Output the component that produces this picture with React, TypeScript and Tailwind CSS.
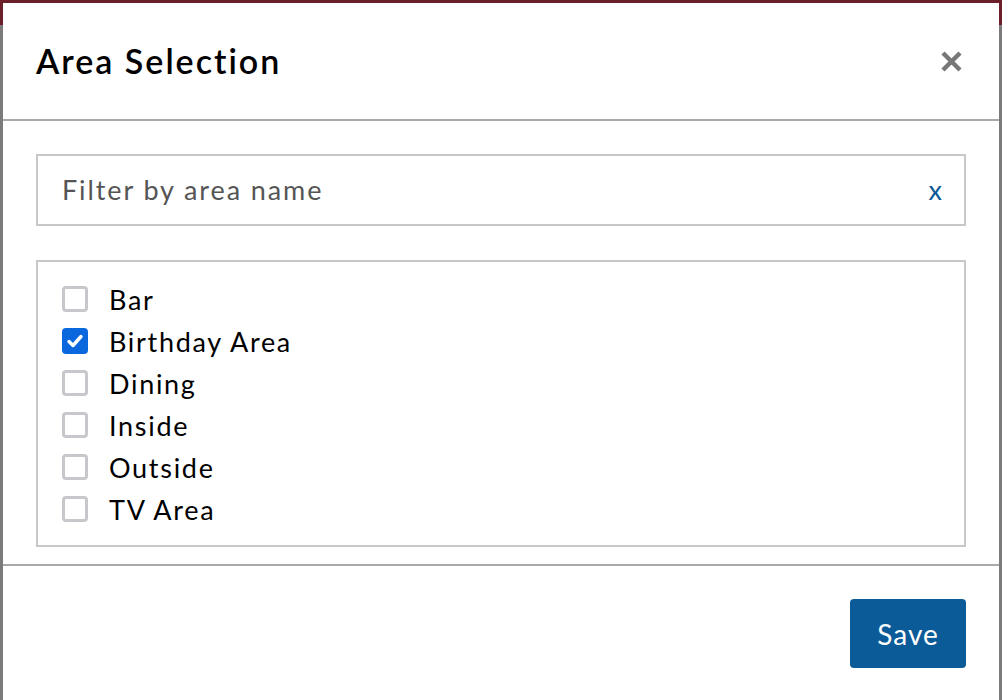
import { useState } from 'react';

const areas = ['Bar', 'Birthday Area', 'Dining', 'Inside', 'Outside', 'TV Area'];

const CheckBox = ({ checked }: { checked: boolean }) =>
  checked ? (
    <span className="w-[26px] h-[26px] rounded-[4px] bg-[#0b67dd] flex items-center justify-center shrink-0">
      <svg width="20" height="20" viewBox="0 0 20 20" fill="none">
        <path d="M4 10.5l4 4 8-9" stroke="white" strokeWidth="3.4" strokeLinecap="round" strokeLinejoin="round" />
      </svg>
    </span>
  ) : (
    <span className="w-[26px] h-[26px] rounded-[4px] border-[3px] border-[#c7c7cc] bg-white shrink-0" />
  );

export default function App() {
  const [selected, setSelected] = useState<string[]>(['Birthday Area']);
  const [query, setQuery] = useState('');

  const toggle = (name: string) =>
    setSelected((prev) => (prev.includes(name) ? prev.filter((n) => n !== name) : [...prev, name]));

  const visible = areas.filter((a) => a.toLowerCase().includes(query.toLowerCase()));

  return (
    <div className="relative w-[1002px] h-[700px] bg-[#7b7b7b] overflow-hidden font-['Lato',sans-serif]">
      {/* dimmed page behind the dialog */}
      <div className="h-[25px] bg-[#6b1f2a]" />

      <div className="absolute left-[3px] top-[3px] right-[3px] bottom-0 bg-white flex flex-col">
        <div className="h-[118px] flex items-center justify-between pl-[33px] pr-[34px] border-b-2 border-[#a9a9a9] shrink-0">
          <h2 className="text-[34px] font-semibold text-black tracking-[2px] pb-[2px]">Area Selection</h2>
          <button className="w-[28px] h-[28px] flex items-center justify-center">
            <svg width="23" height="23" viewBox="0 0 23 23">
              <path d="M3 3l17 17M20 3L3 20" stroke="#777" strokeWidth="4.5" strokeLinecap="butt" />
            </svg>
          </button>
        </div>

        <div className="px-[33px] pt-[33px] pb-[17px] border-b-2 border-[#a9a9a9] shrink-0">
          <div className="h-[72px] border-2 border-[#c8c8c8] flex items-center pl-[24px] pr-[22px]">
            <input
              value={query}
              onChange={(e) => setQuery(e.target.value)}
              placeholder="Filter by area name"
              className="flex-1 text-[27px] tracking-[1.9px] text-[#333] placeholder:text-[#555] outline-none bg-transparent"
            />
            <button onClick={() => setQuery('')} className="text-[27px] text-[#0b5a96] leading-none pb-[2px]">
              x
            </button>
          </div>

          <div className="mt-[34px] h-[287px] border-2 border-[#c8c8c8] pl-[24px] pt-[16px] pb-[14px]">
            {visible.map((name) => (
              <label key={name} onClick={() => toggle(name)} className="h-[42px] flex items-center gap-[21px] cursor-pointer">
                <CheckBox checked={selected.includes(name)} />
                <span className="text-[27px] tracking-[1.7px] text-black pt-[2px]">{name}</span>
              </label>
            ))}
          </div>
        </div>

        <div className="flex justify-end pt-[33px] pr-[33px]">
          <button className="w-[116px] h-[69px] rounded-[4px] bg-[#0c5b99] text-white text-[28px] tracking-[1px]">
            Save
          </button>
        </div>
      </div>
    </div>
  );
}
